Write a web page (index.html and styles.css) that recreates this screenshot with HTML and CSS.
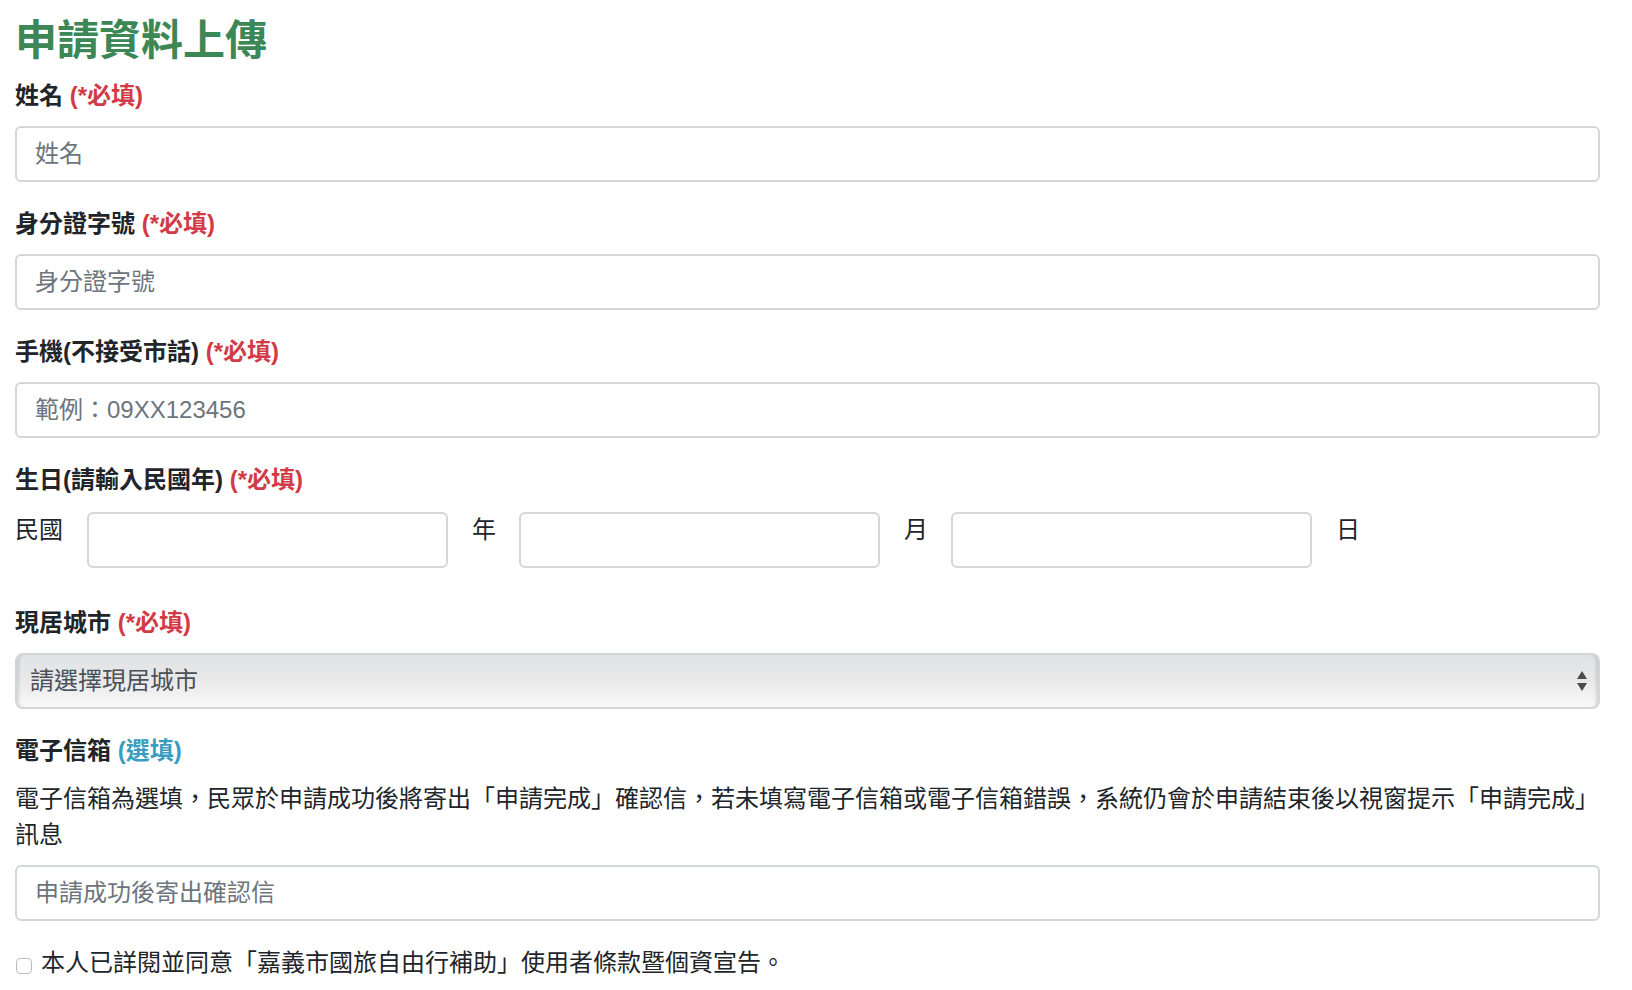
FILE: index.html
```html
<!DOCTYPE html>
<html lang="zh-Hant">
<head>
  <meta charset="UTF-8">
  <title>申請資料上傳</title>
  <link rel="stylesheet" href="styles.css">
</head>
<body>
  <div class="page">
    <h3 class="page-title">申請資料上傳</h3>

    <form class="apply-form">
      <div class="form-group">
        <label class="field-label" for="name">姓名 <span class="req">(*必填)</span></label>
        <input class="form-control" id="name" type="text" placeholder="姓名">
      </div>

      <div class="form-group">
        <label class="field-label" for="id-no">身分證字號 <span class="req">(*必填)</span></label>
        <input class="form-control" id="id-no" type="text" placeholder="身分證字號">
      </div>

      <div class="form-group">
        <label class="field-label" for="mobile">手機(不接受市話) <span class="req">(*必填)</span></label>
        <input class="form-control" id="mobile" type="tel" placeholder="範例：09XX123456">
      </div>

      <div class="form-group date-group">
        <label class="field-label">生日(請輸入民國年) <span class="req">(*必填)</span></label>
        <div class="date-row">
          <span class="date-unit first">民國</span>
          <input class="form-control" type="text" aria-label="年">
          <span class="date-unit">年</span>
          <input class="form-control" type="text" aria-label="月">
          <span class="date-unit">月</span>
          <input class="form-control" type="text" aria-label="日">
          <span class="date-unit">日</span>
        </div>
      </div>

      <div class="form-group">
        <label class="field-label" for="city">現居城市 <span class="req">(*必填)</span></label>
        <div class="select-wrap">
          <select class="city-select" id="city">
            <option>請選擇現居城市</option>
          </select>
          <!-- up / down stepper arrows -->
          <svg class="select-arrows" width="10" height="20" viewBox="0 0 10 20">
            <polygon points="0,8 5,0 10,8" fill="#4a4a4a"/>
            <polygon points="0,12 10,12 5,20" fill="#4a4a4a"/>
          </svg>
        </div>
      </div>

      <div class="form-group">
        <label class="field-label" for="email">電子信箱 <span class="opt">(選填)</span></label>
        <p class="field-hint">電子信箱為選填，民眾於申請成功後將寄出「申請完成」確認信，若未填寫電子信箱或電子信箱錯誤，系統仍會於申請結束後以視窗提示「申請完成」訊息</p>
        <input class="form-control" id="email" type="email" placeholder="申請成功後寄出確認信">
      </div>

      <div class="agree">
        <input type="checkbox" id="agree">
        <label for="agree">本人已詳閱並同意「嘉義市國旅自由行補助」使用者條款暨個資宣告。</label>
      </div>
    </form>
  </div>
</body>
</html>
```

FILE: styles.css
```css
body {
  margin: 0;
  font-family: "Liberation Sans", "Noto Sans CJK TC", sans-serif;
  font-size: 24px;
  line-height: 1.5;
  color: #212529;
  background-color: #fff;
}

.page {
  padding: 16px 32px 0 15px;
}

.page-title {
  margin: 0 0 12px;
  font-size: 42px;
  line-height: 1.2;
  font-weight: 700;
  color: #3b8755;
}

.form-group {
  margin-bottom: 24px;
}

.field-label {
  display: block;
  margin-bottom: 12px;
  font-weight: 700;
}
.req {
  color: #d23b45;
}
.opt {
  color: #3a9dbf;
}

.form-control {
  display: block;
  box-sizing: border-box;
  width: 100%;
  height: 56px;
  margin: 0;
  padding: 0 18px;
  font: inherit;
  color: #495057;
  background-color: #fff;
  border: 2px solid #d3d6da;
  border-radius: 6px;
  outline: none;
}
.form-control::placeholder {
  color: #6c757d;
  opacity: 1;
}

/* birthday: 民國 ___ 年 ___ 月 ___ 日 */
.date-group {
  margin-bottom: 37px;
}
.date-group .field-label {
  margin-bottom: 14px;
}
.date-row {
  display: grid;
  grid-template-columns: 72px 361px 71px 361px 71px 361px 1fr;
  align-items: start;
}
.date-unit {
  padding-left: 24px;
  line-height: 36px;
}
.date-unit.first {
  padding-left: 0;
}

/* city select, mac style gradient button */
.select-wrap {
  position: relative;
}
.city-select {
  display: block;
  box-sizing: border-box;
  width: 100%;
  height: 56px;
  margin: 0;
  padding: 0 40px 0 13px;
  font: inherit;
  color: #495057;
  -webkit-appearance: none;
  appearance: none;
  background: linear-gradient(to bottom, #e1e2e3 0%, #e9e9ea 50%, #f9f9f9 100%);
  border: 2px solid #d3d5d8;
  border-radius: 8px;
  box-shadow: inset 4px 0 3px -2px rgba(0, 0, 0, 0.12), inset -4px 0 3px -2px rgba(0, 0, 0, 0.12);
  outline: none;
}
.select-arrows {
  position: absolute;
  right: 13px;
  top: 50%;
  transform: translateY(-50%);
  pointer-events: none;
}

.field-hint {
  margin: 0 0 12px;
}

.agree {
  display: flex;
  align-items: flex-start;
}
.agree input {
  -webkit-appearance: none;
  appearance: none;
  flex-shrink: 0;
  width: 16px;
  height: 16px;
  margin: 13px 9px 0 1px;
  background-color: #fff;
  border: 1px solid #b9bcc0;
  border-radius: 4px;
}
```
